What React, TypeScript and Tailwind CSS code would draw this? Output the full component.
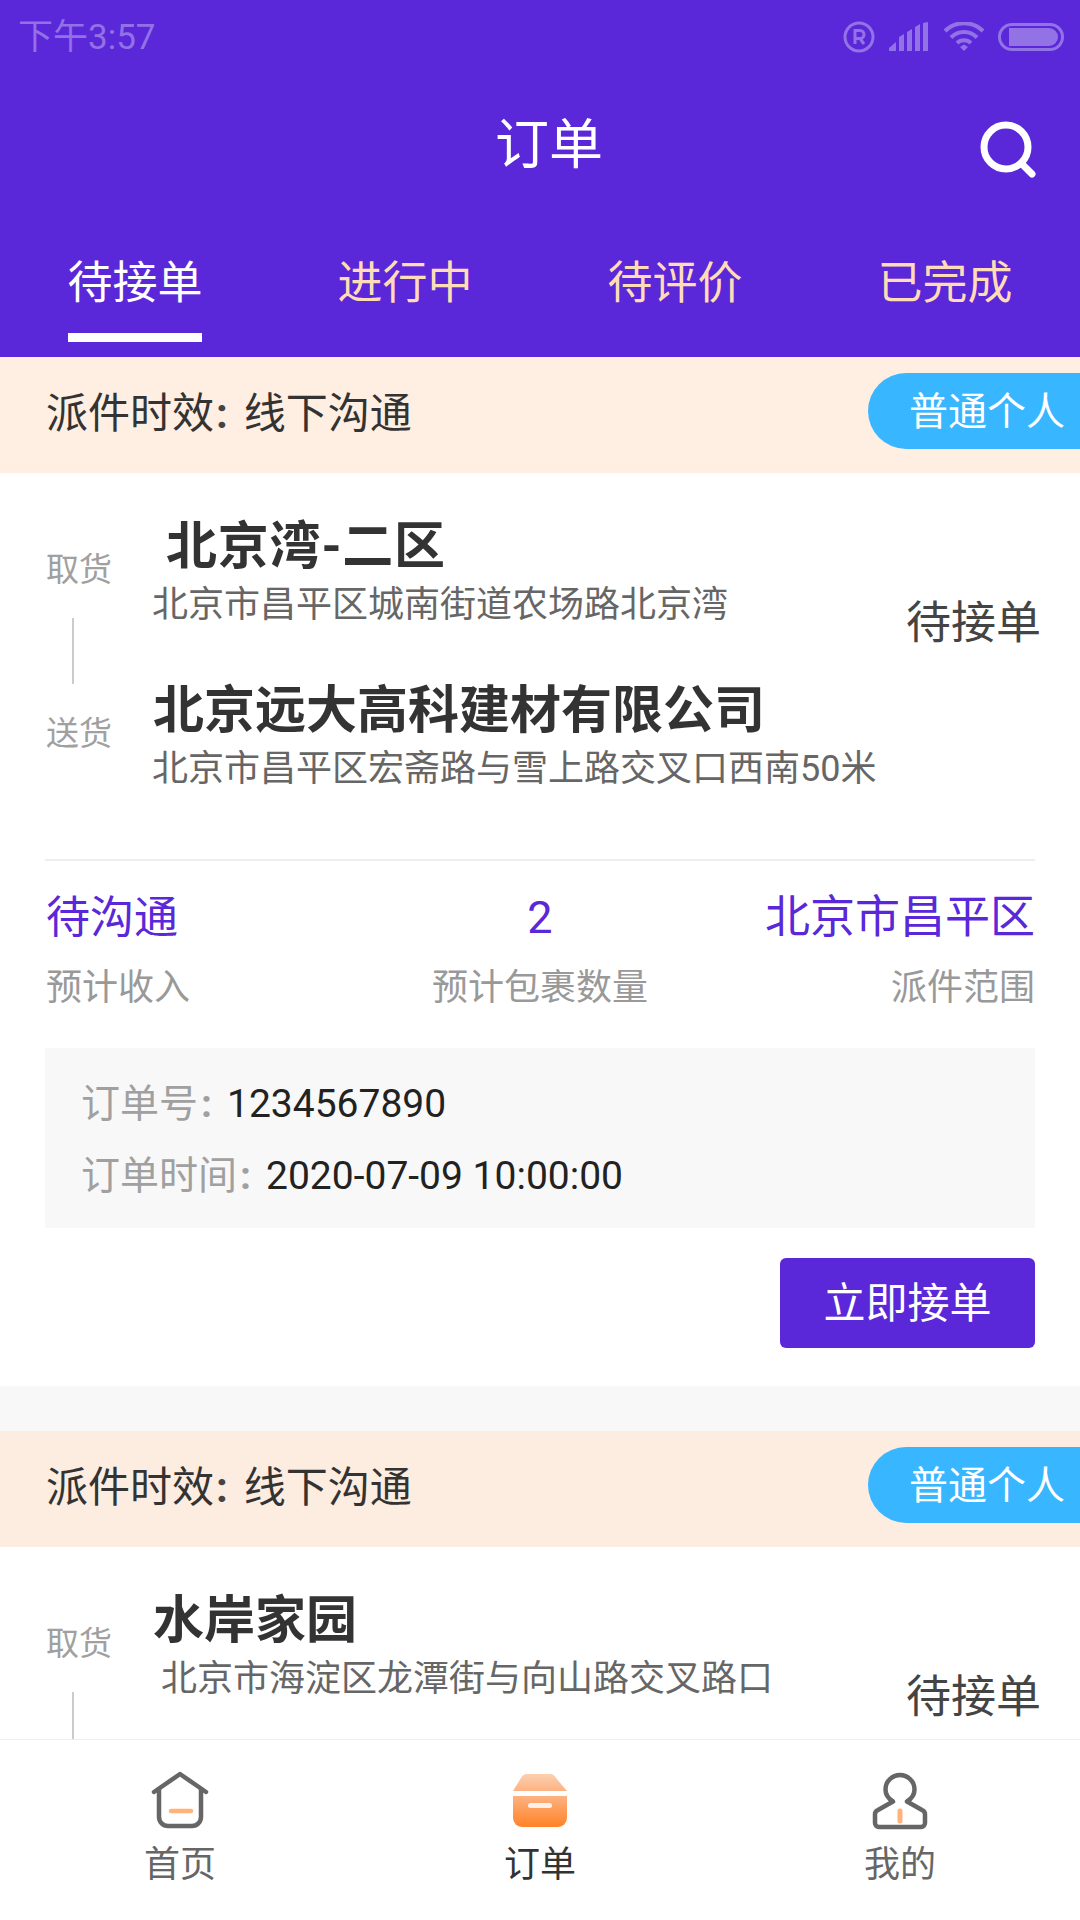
const FONT = "font-['Roboto','Noto_Sans_CJK_SC',sans-serif]";

function StatusIcons() {
  return (
    <div className="flex items-center gap-[13px] text-white/35">
      <svg width="32" height="32" viewBox="0 0 32 32" fill="none" stroke="currentColor" strokeWidth="3">
        <circle cx="16" cy="16" r="14" />
        <path d="M12 23V9.5h5a4 4 0 0 1 0 8h-5M17 17.5l4 5.5" strokeWidth="3" />
      </svg>
      <svg width="42" height="30" viewBox="0 0 42 30" fill="currentColor">
        <path d="M1 29v-3l7-6v9zM11 29V15l5-3v17zM19 29V10l5-3v22zM27 29V5l5-3v27zM35 29V1l5-1v29z" />
      </svg>
      <svg width="42" height="30" viewBox="0 0 42 30" fill="none" stroke="currentColor" strokeWidth="4">
        <path d="M2 9a27 27 0 0 1 38 0M8 15.500a18 18 0 0 1 26 0M14 21a10 10 0 0 1 14 0" />
        <path d="M17 25l4-2.500 4 2.500-4 4z" fill="currentColor" stroke="none" />
      </svg>
      <div className="flex h-[28px] w-[66px] items-center rounded-full border-[3px] border-white/35 pl-[8px] pr-[3px]">
        <div className="h-[18px] w-full rounded-r-full rounded-l-[2px] bg-white/35" />
      </div>
    </div>
  );
}

function SearchIcon() {
  return (
    <svg width="60" height="60" viewBox="0 0 60 60" fill="none" stroke="white">
      <circle cx="26" cy="26" r="22" strokeWidth="7" />
      <path d="M43 44l9 9" strokeWidth="7" strokeLinecap="round" />
    </svg>
  );
}

function Header() {
  const tabs = ["待接单", "进行中", "待评价", "已完成"];
  return (
    <div className="flex h-[357px] shrink-0 flex-col bg-[#5a27d9]">
      <div className="flex h-[74px] items-center justify-between pl-[18px] pr-[16px]">
        <span className="pt-[2px] text-[35px] text-white/35">下午3:57</span>
        <StatusIcons />
      </div>
      <div className="grid h-[138px] grid-cols-[1fr_auto_1fr] items-center pl-[18px]">
        <div />
        <span className="pt-[4px] text-[54px] text-white">订单</span>
        <div className="flex justify-end pr-[40px] pt-[16px]">
          <SearchIcon />
        </div>
      </div>
      <div className="mt-[35px] grid grid-cols-4">
        {tabs.map((t, i) => (
          <div key={t} className="flex flex-col items-center">
            <span className={`text-[45px] leading-[74px] ${i === 0 ? "text-white" : "text-[#ffdcb8]"}`}>{t}</span>
            <div className={`mt-[12px] h-[9px] w-[134px] ${i === 0 ? "bg-white" : ""}`} />
          </div>
        ))}
      </div>
    </div>
  );
}

interface OrderCardProps {
  fromName: string;
  fromAddr: string;
  toName: string;
  toAddr: string;
  bannerClass: string;
  fromNameIndent?: boolean;
  fromAddrIndent?: boolean;
}

function OrderCard({ fromName, fromAddr, toName, toAddr, bannerClass, fromNameIndent, fromAddrIndent }: OrderCardProps) {
  return (
    <div className="bg-white">
      <div className={`flex h-[116px] items-start justify-between pl-[46px] ${bannerClass}`}>
        <span className="flex text-[42px] leading-[114px] text-[#333]">
          派件时效<span className="ml-[2px] mr-[16px] font-bold text-[#444]">:</span>线下沟通
        </span>
        <div className="mt-[16px] flex h-[76px] w-[212px] items-center rounded-l-[38px] bg-[#38b6ff] pl-[41px] pt-[3px] text-[39px] text-white">
          普通个人
        </div>
      </div>

      <div className="flex h-[386px] pl-[46px] pr-[39px]">
        <div className="flex w-[107px] shrink-0 flex-col items-start pt-[77px] text-[33px] leading-[40px] text-[#a0a0a0]">
          <span>取货</span>
          <div className="ml-[26px] mt-[28px] h-[66px] w-[2px] bg-[#ccc]" />
          <span className="mt-[30px]">送货</span>
        </div>
        <div className="flex-1 pt-[44px]">
          <div className={`text-[51px] font-bold leading-[60px] text-[#333] ${fromNameIndent ? "pl-[13px] tracking-[0.8px]" : ""}`}>{fromName}</div>
          <div className={`-ml-px mt-[6px] text-[36px] leading-[44px] text-[#666] ${fromAddrIndent ? "pl-[9px]" : ""}`}>{fromAddr}</div>
          <div className="mt-[54px] text-[51px] font-bold leading-[60px] text-[#333]">{toName}</div>
          <div className="-ml-px mt-[6px] text-[36px] leading-[44px] text-[#666]">{toAddr}</div>
        </div>
        <div className="mt-[121px] text-[45px] leading-[60px] text-[#444]">待接单</div>
      </div>

      <div className="ml-[45px] mr-[45px] border-t-2 border-[#eee] pt-[27px]">
        <div className="grid grid-cols-3">
          <div className="pl-px text-[44px] leading-[60px] text-[#5a27d9]">待沟通</div>
          <div className="text-center text-[45px] leading-[60px] text-[#5a27d9]">2</div>
          <div className="text-right text-[45px] leading-[60px] text-[#5a27d9]">北京市昌平区</div>
          <div className="mt-[18px] pl-px text-[36px] leading-[44px] text-[#999]">预计收入</div>
          <div className="mt-[18px] text-center text-[36px] leading-[44px] text-[#999]">预计包裹数量</div>
          <div className="mt-[18px] text-right text-[36px] leading-[44px] text-[#999]">派件范围</div>
        </div>

        <div className="mt-[38px] flex h-[180px] flex-col gap-[22px] bg-[#f8f8f8] pl-[36px] pt-[31px]">
          <div className="flex items-center leading-[50px]">
            <span className="text-[39px] text-[#a0a0a0]">订单号<span className="ml-[3px] font-bold">:</span></span>
            <span className="ml-[15px] text-[39px] text-[#222]">1234567890</span>
          </div>
          <div className="flex items-center leading-[50px]">
            <span className="text-[39px] text-[#a0a0a0]">订单时间<span className="ml-[3px] font-bold">:</span></span>
            <span className="ml-[15px] text-[39px] text-[#222]">2020-07-09 10:00:00</span>
          </div>
        </div>

        <div className="flex justify-end pb-[38px] pt-[30px]">
          <button className="h-[90px] w-[255px] rounded-[6px] bg-[#5a27d9] text-[42px] text-white">立即接单</button>
        </div>
      </div>
    </div>
  );
}

function HomeIcon() {
  return (
    <svg width="60" height="60" viewBox="0 0 60 60" fill="none" stroke="#666" strokeWidth="4.500" strokeLinecap="round" strokeLinejoin="round">
      <path d="M4 22L30 4l26 18" />
      <path d="M9 19v28a9 9 0 0 0 9 9h24a9 9 0 0 0 9-9V19" />
      <path d="M21 41h20" stroke="#ffb27a" />
    </svg>
  );
}

function BoxIcon() {
  return (
    <svg width="60" height="60" viewBox="0 0 60 60">
      <defs>
        <linearGradient id="boxTop" x1="0" y1="0" x2="0" y2="1">
          <stop offset="0" stopColor="#fbd0b0" />
          <stop offset="1" stopColor="#fdb283" />
        </linearGradient>
        <linearGradient id="boxBottom" x1="0" y1="0" x2="0" y2="1">
          <stop offset="0" stopColor="#fdb283" />
          <stop offset="1" stopColor="#ff8226" />
        </linearGradient>
      </defs>
      <path d="M3 21l8-13a7 7 0 0 1 6-4h23a7 7 0 0 1 6 4l11 13z" fill="url(#boxTop)" />
      <path d="M3 26h54v22a9 9 0 0 1-9 9H12a9 9 0 0 1-9-9z" fill="url(#boxBottom)" />
      <rect x="18" y="33" width="24" height="5" rx="2.500" fill="#fff" fillOpacity="0.85" />
    </svg>
  );
}

function UserIcon() {
  return (
    <svg width="60" height="60" viewBox="0 0 60 60" fill="none" stroke="#666" strokeWidth="4.500" strokeLinejoin="round">
      <path d="M23 31.500C18 28.500 15.500 24 15.500 19.500A14.500 14.500 0 0 1 44.500 19.500C44.500 24 42 28.500 37 31.500l15 8.500a5 5 0 0 1 3 5v8a4 4 0 0 1-4 4H9a4 4 0 0 1-4-4v-8a5 5 0 0 1 3-5z" />
      <path d="M30 41v10" stroke="#ffb27a" strokeWidth="5" strokeLinecap="round" />
    </svg>
  );
}

function BottomNav() {
  const items = [
    { label: "首页", icon: <HomeIcon />, color: "text-[#666]" },
    { label: "订单", icon: <BoxIcon />, color: "text-[#333]" },
    { label: "我的", icon: <UserIcon />, color: "text-[#666]" },
  ];
  return (
    <div className="grid h-[181px] shrink-0 grid-cols-3 border-t border-[#eee] bg-white">
      {items.map((item) => (
        <div key={item.label} className="flex flex-col items-center pt-[30px]">
          {item.icon}
          <span className={`mt-[13px] text-[36px] leading-[44px] ${item.color}`}>{item.label}</span>
        </div>
      ))}
    </div>
  );
}

export default function App() {
  return (
    <div className={`flex h-[1920px] w-[1080px] flex-col overflow-hidden bg-[#f8f8f8] ${FONT}`}>
      <Header />
      <div className="flex min-h-0 flex-1 flex-col gap-[45px] overflow-hidden">
        <OrderCard
          fromName="北京湾-二区"
          fromAddr="北京市昌平区城南街道农场路北京湾"
          toName="北京远大高科建材有限公司"
          toAddr="北京市昌平区宏斋路与雪上路交叉口西南50米"
          bannerClass="bg-[#ffeee2]"
          fromNameIndent
        />
        <OrderCard
          fromName="水岸家园"
          fromAddr="北京市海淀区龙潭街与向山路交叉路口"
          toName=""
          toAddr=""
          bannerClass="bg-[#fdece0]"
          fromAddrIndent
        />
      </div>
      <BottomNav />
    </div>
  );
}
